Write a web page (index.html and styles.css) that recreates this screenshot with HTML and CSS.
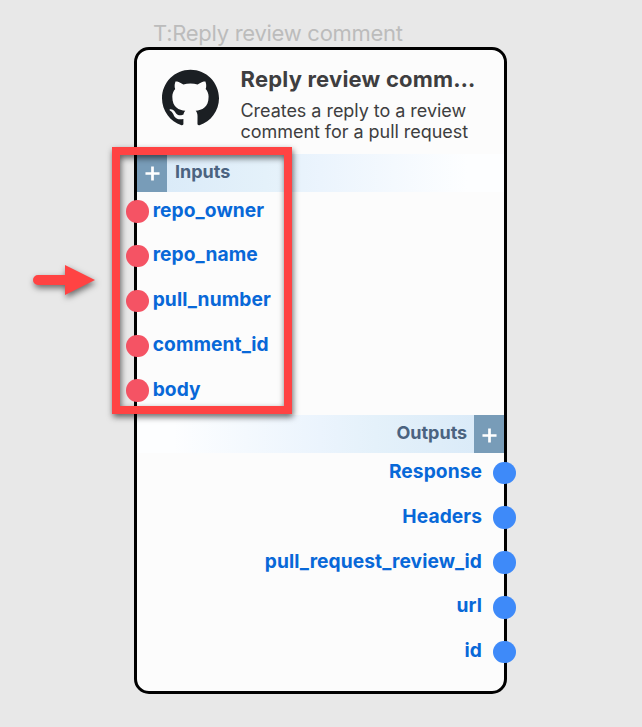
FILE: index.html
```
<!DOCTYPE html>
<html lang="en">
<head>
<meta charset="utf-8">
<title>Reply review comment</title>
<link rel="stylesheet" href="styles.css">
</head>
<body>
<main class="stage">
  <div class="node-label">T:Reply review comment</div>
  <section class="node">
    <header class="head">
      <svg class="logo" viewBox="0 0 24 24"><path d="M12 .297c-6.63 0-12 5.373-12 12 0 5.303 3.438 9.8 8.205 11.385.6.113.82-.258.82-.577 0-.285-.01-1.04-.015-2.04-3.338.724-4.042-1.61-4.042-1.61C4.422 18.07 3.633 17.7 3.633 17.7c-1.087-.744.084-.729.084-.729 1.205.084 1.838 1.236 1.838 1.236 1.07 1.835 2.809 1.305 3.495.998.108-.776.417-1.305.76-1.605-2.665-.3-5.466-1.332-5.466-5.93 0-1.31.465-2.38 1.235-3.22-.135-.303-.54-1.523.105-3.176 0 0 1.005-.322 3.3 1.23.96-.267 1.98-.399 3-.405 1.02.006 2.04.138 3 .405 2.28-1.552 3.285-1.23 3.285-1.23.645 1.653.24 2.873.12 3.176.765.84 1.23 1.91 1.23 3.22 0 4.61-2.805 5.625-5.475 5.92.42.36.81 1.096.81 2.22 0 1.606-.015 2.896-.015 3.286 0 .315.21.69.825.57C20.565 22.092 24 17.592 24 12.297c0-6.627-5.373-12-12-12"/></svg>
      <div class="head-text">
        <h1 class="title">Reply review comm…</h1>
        <p class="desc">Creates a reply to a review<br>comment for a pull request</p>
      </div>
    </header>
    <div class="bar bar-in">
      <span class="add"><svg class="plus" viewBox="0 0 16 16"><path d="M8 .5v15M.5 8h15"/></svg></span>
      <span class="bar-name">Inputs</span>
    </div>
    <ul class="ports ports-in">
      <li class="port"><i class="dot"></i><span>repo_owner</span></li>
      <li class="port"><i class="dot"></i><span>repo_name</span></li>
      <li class="port"><i class="dot"></i><span>pull_number</span></li>
      <li class="port"><i class="dot"></i><span>comment_id</span></li>
      <li class="port"><i class="dot"></i><span>body</span></li>
    </ul>
    <div class="bar bar-out">
      <span class="add"><svg class="plus" viewBox="0 0 16 16"><path d="M8 .5v15M.5 8h15"/></svg></span>
      <span class="bar-name">Outputs</span>
    </div>
    <ul class="ports ports-out">
      <li class="port"><i class="dot"></i><span>Response</span></li>
      <li class="port"><i class="dot"></i><span>Headers</span></li>
      <li class="port"><i class="dot"></i><span>pull_request_review_id</span></li>
      <li class="port"><i class="dot"></i><span>url</span></li>
      <li class="port"><i class="dot"></i><span>id</span></li>
    </ul>
  </section>
  <div class="highlight"></div>
  <svg class="arrow" viewBox="0 0 64 32"><path d="M6 11H33V1L63 16L33 31V21H6A5 5 0 0 1 6 11Z"/></svg>
</main>
</body>
</html>
```
FILE: styles.css
```
* { box-sizing: border-box; }
body {
  margin: 0;
  background: #e8e8e8;
  font-family: Inter, "Liberation Sans", sans-serif;
}
.stage {
  position: relative;
  width: 642px;
  height: 727px;
  padding: 19px 0 0 134px;
  overflow: hidden;
}
.node-label {
  height: 28px;
  padding-left: 19px;
  font-size: 22px;
  line-height: 28px;
  letter-spacing: -.28px;
  color: #bcbcbc;
  white-space: nowrap;
}
.node {
  width: 373px;
  height: 647px;
  border: 3px solid #000;
  border-radius: 15px;
  background: #fcfcfc;
}
.head {
  display: flex;
  height: 104px;
  padding: 15px 0 0 24.5px;
  color: #3e3e40;
}
.logo {
  width: 57px;
  height: 57px;
  margin-top: 4px;
  fill: #1b1f23;
}
.head-text { margin-left: 22px; white-space: nowrap; }
.title {
  margin: 0;
  font-size: 22px;
  font-weight: 700;
  line-height: 28px;
  letter-spacing: .2px;
}
.desc {
  margin: 7px 0 0;
  font-size: 18px;
  line-height: 21px;
  letter-spacing: -.04px;
}
.bar {
  display: flex;
  height: 37.5px;
  font-size: 18px;
  font-weight: 650;
  line-height: 36px;
  color: #4b6380;
}
.bar-in { background: linear-gradient(90deg, #d8e9f8, #e4f1fa 35%, #ebf4fd 50%, #fdfeff 90%); }
.bar-out {
  flex-direction: row-reverse;
  background: linear-gradient(270deg, #d8e9f8, #e4f1fa 35%, #ebf4fd 50%, #fdfeff 90%);
}
.add {
  display: flex;
  align-items: center;
  justify-content: center;
  width: 30px;
  background: #789cb8;
}
.plus {
  width: 15px;
  height: 15px;
  margin-top: 2px;
  fill: none;
  stroke: #fff;
  stroke-width: 2.9;
}
.bar-name { margin: 0 6.8px 0 8px; }
.ports {
  margin: 0;
  padding: 0;
  list-style: none;
}
.port {
  display: flex;
  gap: 4px;
  height: 44.8px;
  margin-left: -10.8px;
  font-size: 19.2px;
  font-weight: 700;
  line-height: 37.6px;
  letter-spacing: .07px;
  color: #0868d8;
}
.dot {
  width: 22.5px;
  height: 22.5px;
  margin-top: 8.7px;
  border-radius: 50%;
  background: #f55364;
}
.ports-out .port {
  flex-direction: row-reverse;
  gap: 11.3px;
  margin: 0 -11.8px 0 0;
}
.ports-out .dot { background: #3e8af9; }
.highlight {
  position: absolute;
  left: 112px;
  top: 147px;
  width: 180px;
  height: 267px;
  border: 8px solid #ff4343;
  filter: drop-shadow(1px 3px 3px rgba(0, 0, 0, .6));
}
.arrow {
  position: absolute;
  left: 32px;
  top: 264px;
  width: 64px;
  height: 32px;
  overflow: visible;
  fill: #ff4343;
  filter: drop-shadow(1px 3px 3px rgba(0, 0, 0, .55));
}
```
